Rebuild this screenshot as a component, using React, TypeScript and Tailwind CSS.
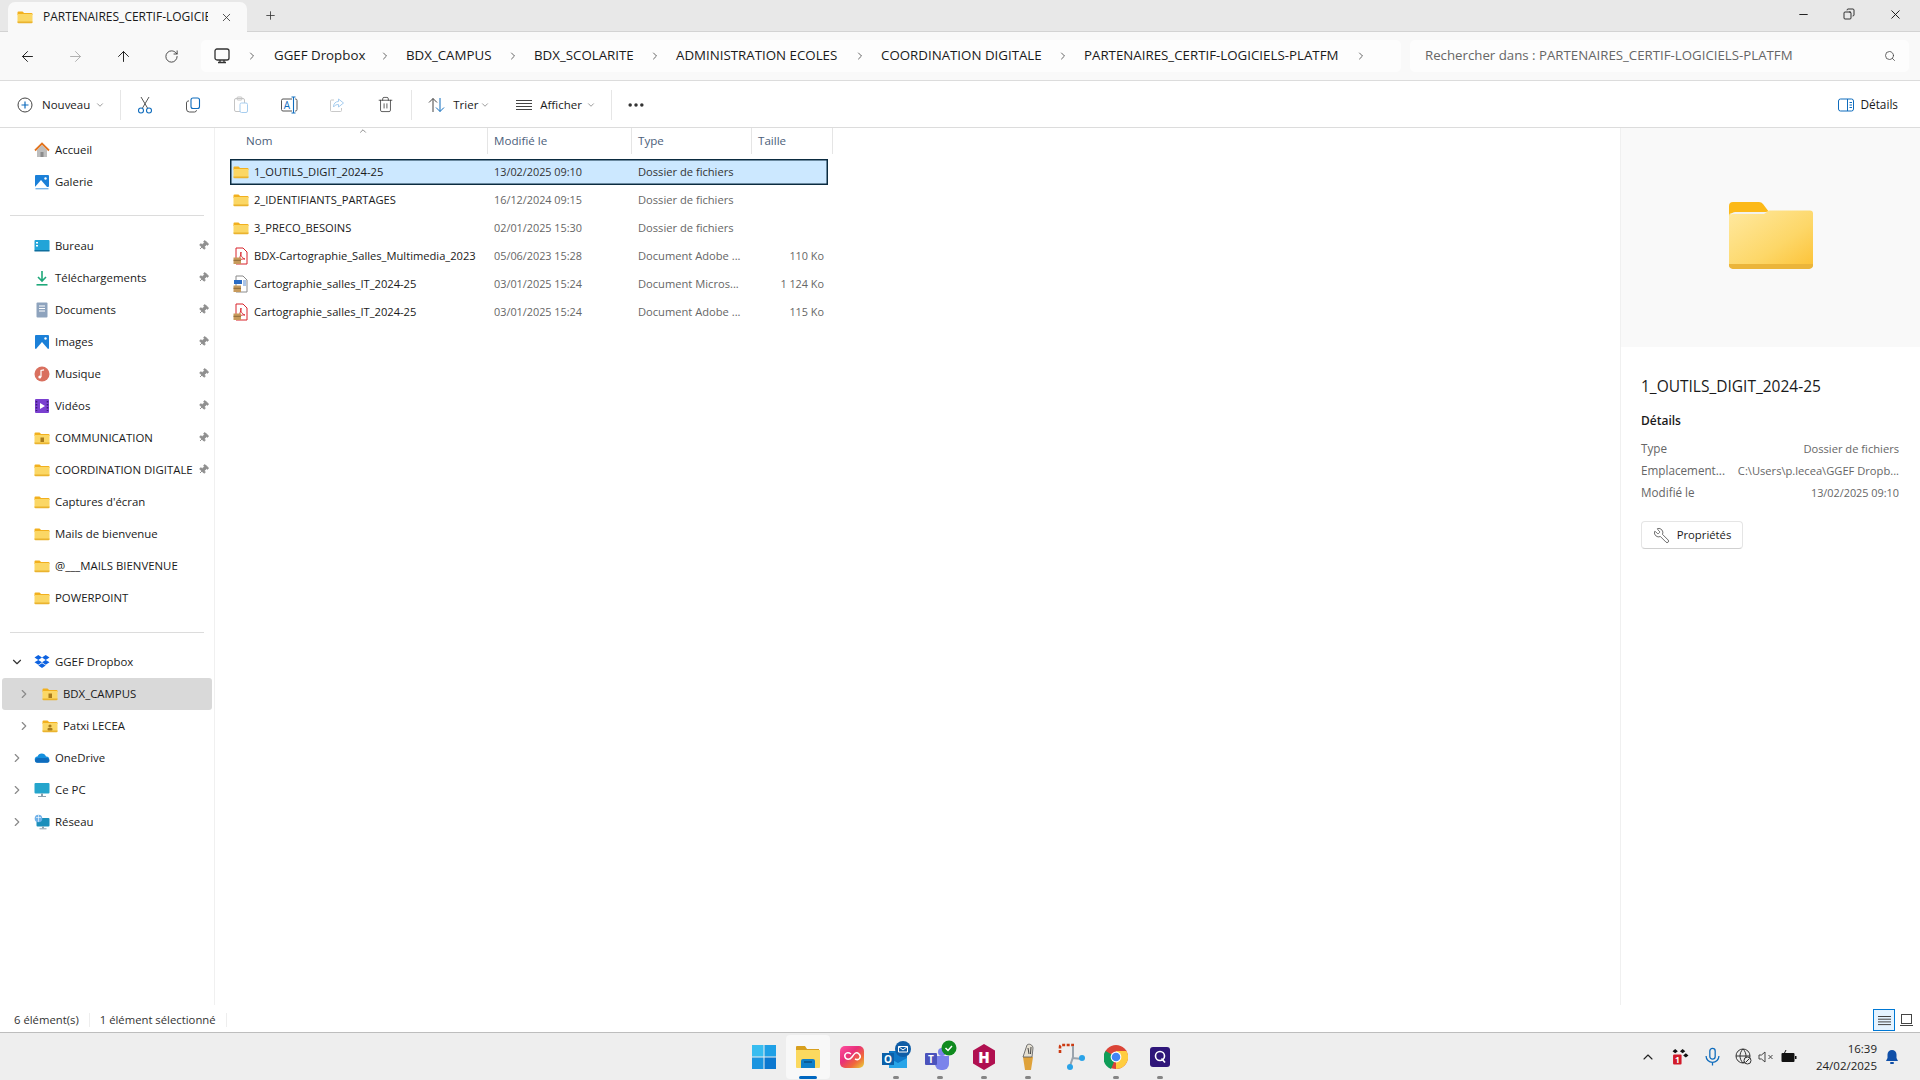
import {
  ArrowLeft,
  ArrowRight,
  ArrowUp,
  ChevronDown,
  ChevronRight,
  ChevronUp,
  Copy,
  MoreHorizontal,
  Pin,
  Plus,
  RotateCw,
  Search,
  Trash2,
  Wrench,
  X,
  Minus,
} from "lucide-react";
import type { ReactNode } from "react";

const font = { fontFamily: '"Open Sans", "Noto Sans", sans-serif' };

function Folder({ size = 16, badge }: { size?: number; badge?: "lock" | "user" }) {
  return (
    <svg width={size} height={size} viewBox="0 0 16 16" className="shrink-0">
      <path d="M0.5 3.5a1 1 0 0 1 1-1h4l1.6 1.4h7.4a1 1 0 0 1 1 1v1H0.5z" fill="#f2b01e" />
      <path d="M0.5 5h15v8a1 1 0 0 1-1 1h-13a1 1 0 0 1-1-1z" fill="#fbd765" />
      <path d="M0.5 12.6h15v.6a1 1 0 0 1-1 1h-13a1 1 0 0 1-1-1z" fill="#eab32f" />
      {badge === "lock" && <rect x="6.5" y="7.5" width="3.5" height="4.5" fill="#a87b1c" />}
      {badge === "user" && (
        <>
          <circle cx="8" cy="8" r="1.6" fill="#a87b1c" />
          <rect x="5.5" y="10" width="5" height="2.4" rx="1" fill="#a87b1c" />
        </>
      )}
    </svg>
  );
}

function BigFolder() {
  return (
    <svg width="84" height="67" viewBox="0 0 84 67">
      <defs>
        <linearGradient id="bigfold" x1="0" y1="0" x2="1" y2="1">
          <stop offset="0" stopColor="#ffe9a0" />
          <stop offset="0.6" stopColor="#fdd768" />
          <stop offset="1" stopColor="#fcc236" />
        </linearGradient>
      </defs>
      <path d="M0 4a4 4 0 0 1 4-4h26a5 5 0 0 1 4 2l6 8v6H0z" fill="#fcb918" />
      <path d="M0 14a3 3 0 0 1 3-3h30l4-1 3-1.500h41a3 3 0 0 1 3 3V62a4 4 0 0 1-4 4H4a4 4 0 0 1-4-4z" fill="url(#bigfold)" />
      <path d="M1 15a3 3 0 0 1 3-3h31l3-2H6a6 6 0 0 0-5 5z" fill="#f2f2ee" />
      <path d="M0 62h84a4 4 0 0 1-4 5H4a4 4 0 0 1-4-5z" fill="#ebb53a" />
    </svg>
  );
}

function Doc({ kind }: { kind: "pdf" | "word" }) {
  return (
    <svg width="16" height="18" viewBox="0 0 16 18" className="shrink-0">
      <path d="M3 1h7l4 4v12H3z" fill="#fff" stroke={kind === "pdf" ? "#d8232a" : "#8a8a8a"} strokeWidth="1" />
      {kind === "pdf" ? (
        <path d="M8 5c-.6 3 .6 6 4 7-3-.4-5 .4-7 3 1-3 3-6 3-10z" fill="none" stroke="#d8232a" strokeWidth=".9" />
      ) : (
        <>
          <rect x="1" y="5" width="8" height="4" fill="#2b6cc4" />
          <path d="M10 6h3M10 8h3M10 10h3" stroke="#2b6cc4" strokeWidth=".8" />
        </>
      )}
      <rect x="0.500" y="10.500" width="7.500" height="6.500" fill="#c79a5b" />
      <rect x="0.500" y="12.800" width="7.500" height="1" fill="#8d6a39" />
    </svg>
  );
}

function HomeIco() {
  return (
    <svg width="16" height="16" viewBox="0 0 16 16">
      <path d="M3 8v7h10V8L8 3z" fill="#bdbdbd" />
      <rect x="6.500" y="10" width="3" height="5" fill="#8b8b8b" />
      <path d="M1 8.500 8 1.500l7 7" fill="none" stroke="#e2741f" strokeWidth="1.800" />
    </svg>
  );
}

function PictureIco({ stack }: { stack?: boolean }) {
  return (
    <svg width="16" height="16" viewBox="0 0 16 16">
      <rect x="1" y="1" width="14" height={stack ? 12 : 14} rx="1" fill="#1b80d8" />
      <path d={stack ? "M1 13 7 6l6 7z" : "M2 15 8 8l6 7z"} fill="#fff" />
      <circle cx="11.500" cy="4.500" r="1.200" fill="#fff" />
      {stack && <rect x="1.500" y="14" width="13" height="1.400" fill="#7ab6ea" />}
    </svg>
  );
}

function SideIcon({ name }: { name: string }) {
  switch (name) {
    case "home":
      return <HomeIco />;
    case "gallery":
      return <PictureIco stack />;
    case "images":
      return <PictureIco />;
    case "desktop":
      return (
        <svg width="16" height="16" viewBox="0 0 16 16">
          <rect x="0.500" y="2" width="15" height="11" rx="1" fill="#22a4d8" />
          <rect x="0.500" y="12" width="15" height="1.500" fill="#0f6f9e" />
          <rect x="2" y="4" width="2" height="1.500" fill="#fff" />
          <rect x="2" y="7" width="2" height="1.500" fill="#fff" />
        </svg>
      );
    case "download":
      return (
        <svg width="16" height="16" viewBox="0 0 16 16" fill="none" stroke="#1fa87a" strokeWidth="1.600">
          <path d="M8 1v9M4 7l4 4 4-4" />
          <path d="M2.500 14.800h11" />
        </svg>
      );
    case "docs":
      return (
        <svg width="16" height="16" viewBox="0 0 16 16">
          <rect x="2.500" y="0.500" width="11" height="15" rx="1" fill="#8ea3bd" />
          <path d="M5 4h6M5 6.500h6M5 9h6" stroke="#fff" strokeWidth="1" />
        </svg>
      );
    case "music":
      return (
        <svg width="16" height="16" viewBox="0 0 16 16">
          <circle cx="8" cy="8" r="7.500" fill="#d9705f" />
          <path d="M7 11V4.500l3-.6" fill="none" stroke="#fff" strokeWidth="1.200" />
          <circle cx="5.800" cy="11" r="1.500" fill="#fff" />
        </svg>
      );
    case "video":
      return (
        <svg width="16" height="16" viewBox="0 0 16 16">
          <rect x="1" y="1" width="14" height="14" rx="1" fill="#7a3fd0" />
          <path d="M6 5v6l5-3z" fill="#fff" />
          <path d="M2.500 3v10M13.500 3v10" stroke="#3c1b77" strokeWidth="1.600" strokeDasharray="1.500 1.500" />
        </svg>
      );
    case "dropbox":
      return (
        <svg width="16" height="16" viewBox="0 0 16 16" fill="#0d62e0">
          <path d="M4.300 1 .5 3.500l3.800 2.400L8 3.500zM11.700 1 8 3.500l3.700 2.400 3.800-2.400zM.5 8.300l3.800 2.400L8 8.300 4.300 5.900zM11.700 5.900 8 8.300l3.700 2.400 3.800-2.400zM4.300 11.600 8 14l3.700-2.400L8 9.200z" />
        </svg>
      );
    case "onedrive":
      return (
        <svg width="16" height="16" viewBox="0 0 16 16">
          <path d="M4 12.500a3 3 0 0 1-.5-6A4.500 4.500 0 0 1 12 6.500a3 3 0 0 1 .5 6z" fill="#1490df" />
          <path d="M1 11a3 3 0 0 1 3-3h8.500a3 3 0 0 1 3 3 2 2 0 0 1-2 1.800H3A2 2 0 0 1 1 11z" fill="#0f6cbd" />
        </svg>
      );
    case "pc":
      return (
        <svg width="16" height="16" viewBox="0 0 16 16">
          <rect x="0.500" y="1" width="15" height="10.500" rx="1" fill="#25a5cc" />
          <rect x="7" y="11.500" width="2" height="2.500" fill="#8aa0ad" />
          <rect x="4" y="14" width="8" height="1" fill="#8aa0ad" />
        </svg>
      );
    default:
      return (
        <svg width="16" height="16" viewBox="0 0 16 16">
          <rect x="2.500" y="4" width="13" height="8.500" rx="1" fill="#1b8fbb" />
          <rect x="8" y="12.500" width="2" height="1.800" fill="#8aa0ad" />
          <rect x="5.500" y="14.300" width="7" height="1" fill="#8aa0ad" />
          <circle cx="4.500" cy="4.500" r="3.800" fill="#6fb1e8" />
          <path d="M2 3.500h5M4.500.8v7" stroke="#fff" strokeWidth=".6" />
        </svg>
      );
  }
}

function SideRow({
  icon,
  label,
  pinned,
  folder,
  level = 0,
  chevron,
  active,
}: {
  icon?: string;
  label: string;
  pinned?: boolean;
  folder?: "plain" | "lock" | "user";
  level?: 0 | 1;
  chevron?: "right" | "down";
  active?: boolean;
}) {
  return (
    <div
      className={`relative flex h-8 items-center rounded-[3px] mx-[2px] ${active ? "bg-[#d9d9d9]" : ""} ${level === 1 ? "pl-[40px]" : "pl-[32px]"}`}
    >
      {chevron === "right" && (
        <ChevronRight
          size={14}
          strokeWidth={2}
          className={`absolute top-[9px] text-[#8a8a8a] ${level === 1 ? "left-[15px]" : "left-[8px]"}`}
        />
      )}
      {chevron === "down" && (
        <ChevronDown size={14} strokeWidth={2} className="absolute left-[8px] top-[9px] text-[#333]" />
      )}
      {folder ? (
        <Folder badge={folder === "plain" ? undefined : folder} />
      ) : (
        <SideIcon name={icon ?? ""} />
      )}
      <span className="ml-[5px] whitespace-nowrap text-[11.4px] text-[#1a1a1a]">{label}</span>
      {pinned && (
        <Pin
          size={11}
          strokeWidth={2}
          className="absolute left-[196px] top-[10px] rotate-45 fill-[#8f8f8f] text-[#8f8f8f]"
        />
      )}
    </div>
  );
}

function Sidebar() {
  return (
    <aside className="w-[215px] shrink-0 border-r border-[#f0f0f0] pt-[6px]">
      <SideRow icon="home" label="Accueil" />
      <SideRow icon="gallery" label="Galerie" />
      <div className="mx-[10px] mb-[14px] mt-[17px] h-px bg-[#dcdcdc]" />
      <SideRow icon="desktop" label="Bureau" pinned />
      <SideRow icon="download" label="Téléchargements" pinned />
      <SideRow icon="docs" label="Documents" pinned />
      <SideRow icon="images" label="Images" pinned />
      <SideRow icon="music" label="Musique" pinned />
      <SideRow icon="video" label="Vidéos" pinned />
      <SideRow folder="lock" label="COMMUNICATION" pinned />
      <SideRow folder="plain" label="COORDINATION DIGITALE" pinned />
      <SideRow folder="plain" label="Captures d'écran" />
      <SideRow folder="plain" label="Mails de bienvenue" />
      <SideRow folder="plain" label="@___MAILS BIENVENUE" />
      <SideRow folder="plain" label="POWERPOINT" />
      <div className="mx-[10px] mb-[13px] mt-[18px] h-px bg-[#dcdcdc]" />
      <SideRow icon="dropbox" label="GGEF Dropbox" chevron="down" />
      <SideRow folder="lock" label="BDX_CAMPUS" level={1} chevron="right" active />
      <SideRow folder="user" label="Patxi LECEA" level={1} chevron="right" />
      <SideRow icon="onedrive" label="OneDrive" chevron="right" />
      <SideRow icon="pc" label="Ce PC" chevron="right" />
      <SideRow icon="network" label="Réseau" chevron="right" />
    </aside>
  );
}

function TabBar() {
  return (
    <div className="flex h-[32px] shrink-0 items-end border-b border-[#d3d3d3] bg-[#e8e8e8] pl-[8px] pr-[2px]">
      <div className="relative -mb-px flex h-[30px] w-[239px] items-center rounded-t-[7px] bg-[#f9f9f9] pl-[9px]">
        <Folder />
        <span className="ml-[10px] w-[165px] overflow-hidden whitespace-nowrap text-[12px] font-medium text-[#1a1a1a]">
          PARTENAIRES_CERTIF-LOGICIELS-PLATFM
        </span>
        <X size={13} strokeWidth={1.5} className="ml-[12px] text-[#333]" />
      </div>
      <Plus size={13} strokeWidth={1.5} className="mb-[9px] ml-[17px] text-[#333]" />
      <div className="ml-auto flex h-full self-start">
        <div className="flex h-[28px] w-[46px] items-center justify-center">
          <Minus size={13} strokeWidth={1.7} className="text-[#111]" />
        </div>
        <div className="flex h-[28px] w-[46px] items-center justify-center">
          <Copy size={12} strokeWidth={1.7} className="-scale-x-100 text-[#111]" />
        </div>
        <div className="flex h-[28px] w-[46px] items-center justify-center">
          <X size={15} strokeWidth={1.5} className="text-[#111]" />
        </div>
      </div>
    </div>
  );
}

function Crumb({ label, width }: { label: string; width: string }) {
  return (
    <div className={`flex items-center ${width}`}>
      <span className="whitespace-nowrap text-[13.3px] text-[#1a1a1a]">{label}</span>
      <ChevronRight size={12} strokeWidth={1.5} className="ml-auto mr-[15px] text-[#333]" />
    </div>
  );
}

function NavBar() {
  const cell = "flex h-8 w-12 items-center justify-center";
  return (
    <div className="flex h-[49px] shrink-0 items-center border-b border-[#dcdcdc] bg-[#f9f9f9] pl-[3px]">
      <div className={cell}>
        <ArrowLeft size={17} strokeWidth={1.4} className="text-[#222]" />
      </div>
      <div className={cell}>
        <ArrowRight size={17} strokeWidth={1.4} className="text-[#b0b0b0]" />
      </div>
      <div className={cell}>
        <ArrowUp size={17} strokeWidth={1.4} className="text-[#222]" />
      </div>
      <div className={cell}>
        <RotateCw size={15} strokeWidth={1.4} className="text-[#333]" />
      </div>
      <div className="ml-[6px] flex h-8 w-[1200px] items-center rounded-[5px] bg-[#fdfdfd] pl-[12px]">
        <svg width="18" height="18" viewBox="0 0 18 18" fill="none" stroke="#333" strokeWidth="1.300">
          <rect x="2" y="2" width="14" height="11" rx="2" />
          <path d="M5 15.500h8M7 13v2.500M11 13v2.500" />
        </svg>
        <ChevronRight size={12} strokeWidth={1.5} className="ml-[15px] mr-[16px] text-[#333]" />
        <Crumb label="GGEF Dropbox" width="w-[132px]" />
        <Crumb label="BDX_CAMPUS" width="w-[128px]" />
        <Crumb label="BDX_SCOLARITE" width="w-[142px]" />
        <Crumb label="ADMINISTRATION ECOLES" width="w-[205px]" />
        <Crumb label="COORDINATION DIGITALE" width="w-[203px]" />
        <Crumb label="PARTENAIRES_CERTIF-LOGICIELS-PLATFM" width="w-[298px]" />
      </div>
      <div className="ml-[9px] flex h-8 w-[499px] items-center justify-between rounded-[5px] bg-[#fdfdfd] pl-[15px] pr-[13px]">
        <span className="text-[13.25px] text-[#666]">Rechercher dans : PARTENAIRES_CERTIF-LOGICIELS-PLATFM</span>
        <Search size={12} strokeWidth={1.6} className="text-[#444]" />
      </div>
    </div>
  );
}

function ToolIcon({ children }: { children: ReactNode }) {
  return <div className="flex h-full w-12 items-center justify-center">{children}</div>;
}

function Sep() {
  return <div className="h-[30px] w-px bg-[#e6e6e6]" />;
}

function Toolbar() {
  return (
    <div className="flex h-[47px] shrink-0 items-center border-b border-[#dcdcdc] bg-white pl-[17px] pr-[22px] pt-[1px]">
      <svg width="16" height="16" viewBox="0 0 16 16" fill="none">
        <circle cx="8" cy="8" r="7" stroke="#444" strokeWidth="1" />
        <path d="M8 4.500v7M4.500 8h7" stroke="#0f6cbd" strokeWidth="1.200" />
      </svg>
      <span className="ml-[9px] text-[11.5px] text-[#1a1a1a]">Nouveau</span>
      <ChevronDown size={10} className="ml-[5px] text-[#888]" />
      <div className="ml-[15px]">
        <Sep />
      </div>
      <div className="flex h-full items-center">
        <ToolIcon>
          <svg width="16" height="18" viewBox="0 0 16 18" fill="none">
            <path d="M4 1l6.500 11M12 1 5.500 12" stroke="#555" strokeWidth="1" />
            <circle cx="4" cy="14.500" r="2.500" stroke="#0f6cbd" strokeWidth="1.100" />
            <circle cx="12" cy="14.500" r="2.500" stroke="#0f6cbd" strokeWidth="1.100" />
          </svg>
        </ToolIcon>
        <ToolIcon>
          <svg width="16" height="16" viewBox="0 0 16 16" fill="none">
            <rect x="6" y="1" width="8.500" height="10.500" rx="2" stroke="#0f6cbd" strokeWidth="1.100" />
            <path d="M4 4a2 2 0 0 0-2.500 2v6A3 3 0 0 0 4.500 15h5a2 2 0 0 0 2-1.800" stroke="#555" strokeWidth="1" />
          </svg>
        </ToolIcon>
        <ToolIcon>
          <svg width="16" height="18" viewBox="0 0 16 18" fill="none">
            <rect x="1.500" y="2.500" width="10" height="13" rx="1.500" stroke="#c4c4c4" />
            <rect x="4" y="1" width="5" height="3" rx="1" stroke="#c4c4c4" />
            <rect x="7" y="7" width="7.500" height="9.500" rx="1.500" fill="#fff" stroke="#a6cdef" />
          </svg>
        </ToolIcon>
        <ToolIcon>
          <svg width="18" height="18" viewBox="0 0 18 18" fill="none">
            <path d="M12 3H3a1.500 1.500 0 0 0-1.500 1.500v9A1.500 1.500 0 0 0 3 15h9M15 3h.5A1.500 1.500 0 0 1 17 4.500v9a1.500 1.500 0 0 1-1.500 1.500H15" stroke="#555" />
            <path d="M13.500 1v16M11.500 1h4M11.500 17h4" stroke="#0f6cbd" strokeWidth="1.100" />
            <text x="7" y="12.500" textAnchor="middle" fontSize="10" fill="#0f6cbd">A</text>
          </svg>
        </ToolIcon>
        <ToolIcon>
          <svg width="16" height="16" viewBox="0 0 16 16" fill="none">
            <path d="M5 3H2.500a1 1 0 0 0-1 1v9.500a1 1 0 0 0 1 1h9a1 1 0 0 0 1-1V11" stroke="#c9c9c9" />
            <path d="M9.500 2v2.500C6.500 4.500 4.500 6.500 4.500 10c1.500-2 3-2.500 5-2.500V10l5-4z" stroke="#a6cdef" />
          </svg>
        </ToolIcon>
        <ToolIcon>
          <Trash2 size={17} strokeWidth={1.1} className="text-[#333]" />
        </ToolIcon>
      </div>
      <div className="ml-[2px]">
        <Sep />
      </div>
      <svg width="17" height="16" viewBox="0 0 17 16" fill="none" className="ml-[16px]">
        <path d="M5 15V1.500M1 5.500l4-4 4 4" stroke="#444" />
        <path d="M12 1v13.500M8 10.500l4 4 4-4" stroke="#0f6cbd" />
      </svg>
      <span className="ml-[8px] w-[22px] text-[11.5px] text-[#1a1a1a]">Trier</span>
      <ChevronDown size={10} className="ml-[5px] text-[#888]" />
      <svg width="16" height="14" viewBox="0 0 16 14" fill="none" stroke="#444" className="ml-[26px]">
        <path d="M0 2.500h16M0 5.500h16M0 8.500h16M0 11.500h16" />
      </svg>
      <span className="ml-[8px] w-[41px] whitespace-nowrap text-[11.5px] text-[#1a1a1a]">Afficher</span>
      <ChevronDown size={10} className="ml-[5px] text-[#888]" />
      <div className="ml-[15px]">
        <Sep />
      </div>
      <MoreHorizontal size={20} strokeWidth={2.2} className="ml-[14px] text-[#333]" />
      <svg width="16" height="14" viewBox="0 0 16 14" fill="none" className="ml-auto">
        <rect x=".5" y="1" width="15" height="12" rx="2" stroke="#0f6cbd" />
        <path d="M9.500 1v12" stroke="#0f6cbd" />
        <path d="M11.500 4.500h2.500M11.500 7h2.500M11.500 9.500h2.500" stroke="#0f6cbd" />
      </svg>
      <span className="ml-[6px] text-[11.8px] text-[#1a1a1a]">Détails</span>
    </div>
  );
}

const rows: {
  name: string;
  date: string;
  type: string;
  size: string;
  icon: "folder" | "pdf" | "word";
}[] = [
  { name: "1_OUTILS_DIGIT_2024-25", date: "13/02/2025 09:10", type: "Dossier de fichiers", size: "", icon: "folder" },
  { name: "2_IDENTIFIANTS_PARTAGES", date: "16/12/2024 09:15", type: "Dossier de fichiers", size: "", icon: "folder" },
  { name: "3_PRECO_BESOINS", date: "02/01/2025 15:30", type: "Dossier de fichiers", size: "", icon: "folder" },
  { name: "BDX-Cartographie_Salles_Multimedia_2023", date: "05/06/2023 15:28", type: "Document Adobe ...", size: "110 Ko", icon: "pdf" },
  { name: "Cartographie_salles_IT_2024-25", date: "03/01/2025 15:24", type: "Document Micros...", size: "1 124 Ko", icon: "word" },
  { name: "Cartographie_salles_IT_2024-25", date: "03/01/2025 15:24", type: "Document Adobe ...", size: "115 Ko", icon: "pdf" },
];

function FileList() {
  const hcell = "flex h-full items-center border-r border-[#e5e5e5] pl-[6px] text-[11.6px] text-[#4c607a]";
  return (
    <main className="min-w-0 flex-1 pl-[15px]">
      <div className="relative flex h-[26px]">
        <ChevronUp size={10} className="absolute left-[128px] top-[-2px] text-[#777]" />
        <div className={`${hcell} w-[258px] pl-[16px]`}>Nom</div>
        <div className={`${hcell} w-[144px]`}>Modifié le</div>
        <div className={`${hcell} w-[120px]`}>Type</div>
        <div className={`${hcell} w-[81px]`}>Taille</div>
      </div>
      <div className="mt-[4px] w-[598px]">
        {rows.map((r, i) => (
          <div key={i} className="flex h-[28px] items-center">
            <div
              className={`flex h-[26px] w-full items-center ${i === 0 ? "bg-[#cce8ff] shadow-[inset_0_0_0_1.5px_#0b2b40]" : ""}`}
            >
              <div className="flex w-[258px] items-center pl-[3px]">
                {r.icon === "folder" ? <Folder /> : <Doc kind={r.icon} />}
                <span className="ml-[5px] whitespace-nowrap text-[11.15px] text-[#1a1a1a]">{r.name}</span>
              </div>
              <div className={`w-[144px] pl-[6px] text-[10.85px] ${i === 0 ? "text-[#333]" : "text-[#666]"}`}>{r.date}</div>
              <div className={`w-[120px] pl-[6px] text-[11.15px] ${i === 0 ? "text-[#333]" : "text-[#666]"}`}>{r.type}</div>
              <div className="flex-1 pr-[4px] text-right text-[10.85px] text-[#666]">{r.size}</div>
            </div>
          </div>
        ))}
      </div>
    </main>
  );
}

function DetailRow({ label, value, small }: { label: string; value: string; small?: boolean }) {
  return (
    <div className="flex h-[22px] items-center justify-between whitespace-nowrap text-[#666]">
      <span className="text-[11.7px]">{label}</span>
      <span className={small ? "text-[10.85px]" : "text-[11.15px]"}>{value}</span>
    </div>
  );
}

function DetailsPane() {
  return (
    <aside className="w-[300px] shrink-0 border-l border-[#f0f0f0]">
      <div className="flex h-[219px] items-center justify-center bg-[#f9f9f9] pb-[5px]">
        <BigFolder />
      </div>
      <div className="pl-[20px] pr-[21px]">
        <div className="mt-[28px] text-[15.5px] font-medium text-[#1a1a1a]">1_OUTILS_DIGIT_2024-25</div>
        <div className="mt-[14px] text-[12px] font-semibold text-[#1a1a1a]">Détails</div>
        <div className="mt-[8px]">
          <DetailRow label="Type" value="Dossier de fichiers" />
          <DetailRow label="Emplacement..." value="C:\Users\p.lecea\GGEF Dropb..." />
          <DetailRow label="Modifié le" value="13/02/2025 09:10" small />
        </div>
        <div className="mt-[17px] flex h-[28px] w-[102px] items-center justify-center gap-[7px] rounded-[4px] border border-[#e5e5e5] border-b-[#d0d0d0] text-[11.3px] text-[#1a1a1a]">
          <Wrench size={17} strokeWidth={1} className="-scale-x-100 text-[#333]" />
          Propriétés
        </div>
      </div>
    </aside>
  );
}

function StatusBar() {
  return (
    <div className="flex h-[27px] shrink-0 items-center bg-white pl-[14px] pr-[7px] pt-[3px] text-[11.3px] text-[#333]">
      <span>6 élément(s)</span>
      <div className="ml-[10px] h-[14px] w-px bg-[#eee]" />
      <span className="ml-[10px]">1 élément sélectionné</span>
      <div className="ml-[10px] h-[14px] w-px bg-[#eee]" />
      <div className="ml-auto flex items-center gap-[5px]">
        <div className="flex h-[22px] w-[22px] items-center justify-center border border-[#0078d4] bg-[#e5f3ff]">
          <svg width="13" height="11" viewBox="0 0 13 11" stroke="#444">
            <path d="M0 1.500h13M0 4.200h13M0 6.900h13M0 9.600h13" />
          </svg>
        </div>
        <svg width="13" height="13" viewBox="0 0 13 13" fill="none" stroke="#444">
          <rect x="1.500" y=".5" width="10" height="9" />
          <path d="M0 11.500h13" />
        </svg>
      </div>
    </div>
  );
}

function TaskIcon({ children, dot, active }: { children: ReactNode; dot?: boolean; active?: boolean }) {
  return (
    <div className={`relative flex h-[44px] w-[44px] items-center justify-center rounded-[4px] ${active ? "bg-[#f8f8f8]" : ""}`}>
      {children}
      {dot && <div className="absolute bottom-0 left-[19px] h-[3px] w-[6px] rounded-full bg-[#858585]" />}
      {active && <div className="absolute bottom-0 left-[13px] h-[3px] w-[18px] rounded-full bg-[#0067c0]" />}
    </div>
  );
}

function Taskbar() {
  return (
    <div className="relative flex h-[48px] shrink-0 items-center justify-center border-t border-[#bdbdbd] bg-[#eeeeee] pl-[3px]">
      <div className="flex items-center">
        <TaskIcon>
          <svg width="24" height="24" viewBox="0 0 24 24">
            <rect x="0" y="0" width="11.500" height="11.500" fill="#38bdf0" />
            <rect x="12.500" y="0" width="11.500" height="11.500" fill="#1fa0e6" />
            <rect x="0" y="12.500" width="11.500" height="11.500" fill="#1a95e0" />
            <rect x="12.500" y="12.500" width="11.500" height="11.500" fill="#0b78d0" />
          </svg>
        </TaskIcon>
        <TaskIcon active>
          <svg width="26" height="24" viewBox="0 0 26 24">
            <path d="M1 2a1 1 0 0 1 1-1h8l2 3h12v3H1z" fill="#d8a01f" />
            <path d="M1 5h24v17a1 1 0 0 1-1 1H2a1 1 0 0 1-1-1z" fill="#fbd95f" />
            <path d="M6 16a2 2 0 0 1 2-2h10a2 2 0 0 1 2 2v7H6z" fill="#0f7fc9" />
            <rect x="9" y="16" width="8" height="2" fill="#0a5c97" />
          </svg>
        </TaskIcon>
        <TaskIcon>
          <svg width="24" height="22" viewBox="0 0 24 22">
            <defs>
              <linearGradient id="ccgrad" x1="0" y1="0" x2="1" y2="1">
                <stop offset="0" stopColor="#ff4fa0" />
                <stop offset="0.4" stopColor="#e8307a" />
                <stop offset="0.7" stopColor="#f0683a" />
                <stop offset="1" stopColor="#e8d63a" />
              </linearGradient>
            </defs>
            <rect width="24" height="22" rx="5" fill="url(#ccgrad)" />
            <path d="M11 8c-4-3-7 0-6 3s5 3 7 0 4-6 7-3 0 7-4 5" fill="none" stroke="#fff" strokeWidth="1.500" />
          </svg>
        </TaskIcon>
        <TaskIcon dot>
          <svg width="30" height="30" viewBox="0 0 30 30" className="overflow-visible">
            <rect x="8" y="9" width="18" height="17" fill="#0f78c8" />
            <path d="M8 26V16l9 5 9-5v10z" fill="#27a4e8" />
            <rect x="1" y="11" width="12" height="12" fill="#0a5fa8" />
            <text x="7" y="21" textAnchor="middle" fontSize="10" fontWeight="700" fill="#fff">O</text>
            <circle cx="22" cy="7" r="8" fill="#0f5da6" />
            <path d="M17.500 4.500h9v5.500h-9zM17.500 4.500l4.500 3.500 4.500-3.500" fill="none" stroke="#fff" />
          </svg>
        </TaskIcon>
        <TaskIcon dot>
          <svg width="30" height="30" viewBox="0 0 30 30" className="overflow-visible">
            <circle cx="17" cy="10" r="4" fill="#7b83eb" />
            <path d="M10 14h14v8a6 6 0 0 1-6 6h-2a6 6 0 0 1-6-6z" fill="#7b83eb" />
            <rect x="0" y="11" width="12" height="12" rx="1" fill="#4b53bc" />
            <text x="6" y="21" textAnchor="middle" fontSize="10" fontWeight="700" fill="#fff">T</text>
            <circle cx="24" cy="6" r="7.500" fill="#0f8a1e" />
            <path d="M20.500 6l2.500 2.500 4-4.500" fill="none" stroke="#fff" strokeWidth="1.500" />
          </svg>
        </TaskIcon>
        <TaskIcon dot>
          <svg width="24" height="26" viewBox="0 0 24 26">
            <path d="M12 0l11 6.500v13L12 26 1 19.500v-13z" fill="#b01050" />
            <text x="12" y="19" textAnchor="middle" fontSize="15" fontWeight="800" fill="#fff">H</text>
          </svg>
        </TaskIcon>
        <TaskIcon dot>
          <svg width="16" height="28" viewBox="0 0 16 28">
            <path d="M3 14h10l-2 13H5z" fill="#dfa23a" />
            <path d="M3 14 7 2c2-2 6 0 6 3l-1 9z" fill="#e4dfd2" stroke="#555" strokeWidth=".8" />
            <path d="M8 5l1 6M11 4l-.5 7" stroke="#444" />
          </svg>
        </TaskIcon>
        <TaskIcon>
          <svg width="28" height="28" viewBox="0 0 28 28">
            <path d="M2 10V4a2 2 0 0 1 2-2h12" fill="none" stroke="#cc3a12" strokeWidth="2.600" strokeDasharray="3 1.500" />
            <path d="M15 3v11l-3 9M14 15l11 1" fill="none" stroke="#9aa4ad" strokeWidth="2" />
            <circle cx="24" cy="15" r="3" fill="#2aa3e8" />
            <circle cx="12" cy="24" r="3" fill="#2aa3e8" />
          </svg>
        </TaskIcon>
        <TaskIcon dot>
          <svg width="24" height="24" viewBox="0 0 24 24">
            <circle cx="12" cy="12" r="12" fill="#db4437" />
            <path d="M1.600 6 12 12l-5 12A12 12 0 0 1 1.600 6z" fill="#0f9d58" />
            <path d="M12 24a12 12 0 0 0 10.400-18H12z" fill="#ffcd40" />
            <circle cx="12" cy="12" r="5.400" fill="#fff" />
            <circle cx="12" cy="12" r="4.300" fill="#4285f4" />
          </svg>
        </TaskIcon>
        <TaskIcon dot>
          <svg width="20" height="20" viewBox="0 0 20 20">
            <rect width="20" height="20" rx="3" fill="#2f1679" />
            <circle cx="10" cy="9" r="4.500" fill="none" stroke="#fff" strokeWidth="1.600" />
            <path d="M11.500 11.500l3.500 4" stroke="#fff" strokeWidth="1.600" />
          </svg>
        </TaskIcon>
      </div>
      <div className="absolute right-[20px] top-0 flex h-full items-center">
        <ChevronUp size={16} strokeWidth={1.7} className="mr-[16px] text-[#222]" />
        <svg width="17" height="17" viewBox="0 0 16 16" className="mr-[16px]">
          <path d="M3 1 .5 3 3 5l2.500-2zM10 1 7.500 3 10 5l2.500-2zM13 5l-2.500 2L13 9l2.500-2z" fill="#111" />
          <rect x="1" y="6" width="8" height="9.500" rx="1" fill="#d11a2a" />
          <text x="5" y="14" textAnchor="middle" fontSize="8" fontWeight="700" fill="#fff">1</text>
        </svg>
        <svg width="15" height="20" viewBox="0 0 14 18" fill="none" stroke="#0f6cbd" strokeWidth="1.200" className="mr-[15px]">
          <rect x="4.500" y="1" width="5" height="10" rx="2.500" />
          <path d="M1 8a6 6 0 0 0 12 0M7 14v3" />
        </svg>
        <svg width="17" height="17" viewBox="0 0 17 17" fill="none" stroke="#333" className="mr-[6px]">
          <circle cx="8" cy="8" r="7" />
          <path d="M1 8h14M8 1c-4 4-4 10 0 14M8 1c4 4 4 10 0 14" />
          <circle cx="12.500" cy="12.500" r="3.500" fill="#eee" />
          <path d="M10.500 14.500l4-4" />
        </svg>
        <svg width="16" height="14" viewBox="0 0 16 14" fill="none" stroke="#444" className="mr-[7px]">
          <path d="M1 5h2.500L7 2v10L3.500 9H1zM10.500 5l4 4M14.500 5l-4 4" />
        </svg>
        <svg width="16" height="14" viewBox="0 0 16 14" className="mr-[10px]">
          <rect x=".5" y="3" width="13" height="9" rx="1" fill="#111" />
          <rect x="14" y="6" width="1.500" height="3" fill="#111" />
          <path d="M5 0 3 4h2.500L4 7" fill="none" stroke="#111" />
        </svg>
        <div className="w-[70px] text-right text-[11.5px] leading-[17px] text-[#222]">
          <div>16:39</div>
          <div>24/02/2025</div>
        </div>
        <svg width="16" height="16" viewBox="0 0 16 16" className="ml-[7px]">
          <path d="M8 1a4.500 4.500 0 0 0-4.500 4.500V9L2 12h12l-1.500-3V5.500A4.500 4.500 0 0 0 8 1z" fill="#0f4fa8" />
          <rect x="6" y="13" width="4" height="2" rx="1" fill="#0f4fa8" />
        </svg>
      </div>
    </div>
  );
}

export default function App() {
  return (
    <div className="flex h-screen w-[1920px] flex-col overflow-hidden bg-white" style={font}>
      <TabBar />
      <NavBar />
      <Toolbar />
      <div className="flex min-h-0 flex-1">
        <Sidebar />
        <FileList />
        <DetailsPane />
      </div>
      <StatusBar />
      <Taskbar />
    </div>
  );
}
